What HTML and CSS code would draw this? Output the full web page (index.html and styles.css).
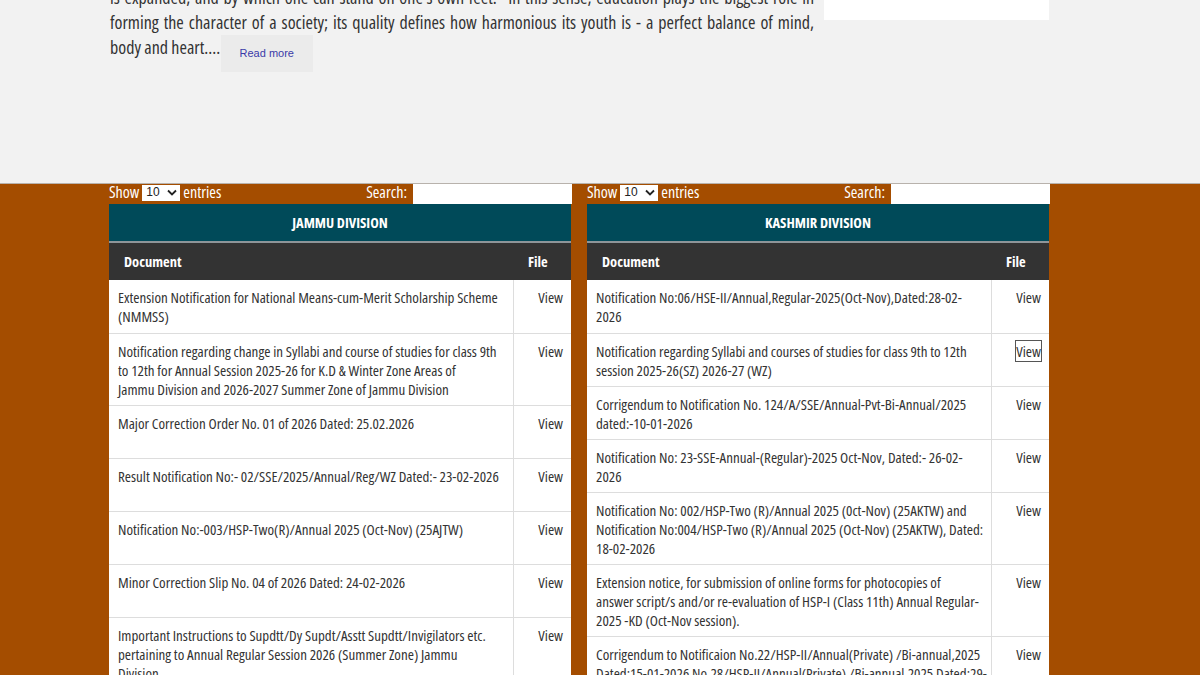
FILE: index.html
```html
<!DOCTYPE html>
<html lang="en">
<head>
<meta charset="utf-8">
<title>Notifications</title>
<link rel="stylesheet" href="styles.css">
</head>
<body>
<section class="intro">
  <div class="intro-inner">
    <div class="intro-text">
      <p>is expanded, and by which one can stand on one's own feet." In this sense, education plays the biggest role in forming the character of a society; its quality defines how harmonious its youth is - a perfect balance of mind, body and heart.... <a class="read-more" href="#">Read more</a></p>
    </div>
    <aside class="intro-side"></aside>
  </div>
</section>

<section class="band">
  <div class="band-inner">
    <div class="division">
      <div class="dt-controls">
        <label class="dt-length">Show <span class="dt-select">10<svg width="10" height="7" viewBox="0 0 10 7"><path d="M1 1.5 L5 5.5 L9 1.5" fill="none" stroke="#222" stroke-width="1.8"/></svg></span> entries</label>
        <label class="dt-search">Search: <span class="dt-input"></span></label>
      </div>
      <table class="docs">
        <colgroup><col class="col-doc"><col class="col-file"></colgroup>
        <thead>
          <tr><th colspan="2" class="div-title">JAMMU DIVISION</th></tr>
          <tr class="col-heads"><th class="c-doc">Document</th><th class="c-file">File</th></tr>
        </thead>
        <tbody>
          <tr><td class="c-doc">Extension Notification for National Means-cum-Merit Scholarship Scheme<br>(NMMSS)</td><td class="c-file"><a href="#">View</a></td></tr>
          <tr><td class="c-doc">Notification regarding change in Syllabi and course of studies for class 9th<br>to 12th for Annual Session 2025-26 for K.D &amp; Winter Zone Areas of<br>Jammu Division and 2026-2027 Summer Zone of Jammu Division</td><td class="c-file"><a href="#">View</a></td></tr>
          <tr><td class="c-doc">Major Correction Order No. 01 of 2026 Dated: 25.02.2026</td><td class="c-file"><a href="#">View</a></td></tr>
          <tr><td class="c-doc">Result Notification No:- 02/SSE/2025/Annual/Reg/WZ Dated:- 23-02-2026</td><td class="c-file"><a href="#">View</a></td></tr>
          <tr><td class="c-doc">Notification No:-003/HSP-Two(R)/Annual 2025 (Oct-Nov) (25AJTW)</td><td class="c-file"><a href="#">View</a></td></tr>
          <tr><td class="c-doc">Minor Correction Slip No. 04 of 2026 Dated: 24-02-2026</td><td class="c-file"><a href="#">View</a></td></tr>
          <tr><td class="c-doc">Important Instructions to Supdtt/Dy Supdt/Asstt Supdtt/Invigilators etc.<br>pertaining to Annual Regular Session 2026 (Summer Zone) Jammu<br>Division</td><td class="c-file"><a href="#">View</a></td></tr>
        </tbody>
      </table>
    </div>

    <div class="division">
      <div class="dt-controls">
        <label class="dt-length">Show <span class="dt-select">10<svg width="10" height="7" viewBox="0 0 10 7"><path d="M1 1.5 L5 5.5 L9 1.5" fill="none" stroke="#222" stroke-width="1.8"/></svg></span> entries</label>
        <label class="dt-search">Search: <span class="dt-input"></span></label>
      </div>
      <table class="docs">
        <colgroup><col class="col-doc"><col class="col-file"></colgroup>
        <thead>
          <tr><th colspan="2" class="div-title">KASHMIR DIVISION</th></tr>
          <tr class="col-heads"><th class="c-doc">Document</th><th class="c-file">File</th></tr>
        </thead>
        <tbody>
          <tr><td class="c-doc">Notification No:06/HSE-II/Annual,Regular-2025(Oct-Nov),Dated:28-02-<br>2026</td><td class="c-file"><a href="#">View</a></td></tr>
          <tr><td class="c-doc">Notification regarding Syllabi and courses of studies for class 9th to 12th<br>session 2025-26(SZ) 2026-27 (WZ)</td><td class="c-file"><a href="#" class="focused">View</a></td></tr>
          <tr><td class="c-doc">Corrigendum to Notification No. 124/A/SSE/Annual-Pvt-Bi-Annual/2025<br>dated:-10-01-2026</td><td class="c-file"><a href="#">View</a></td></tr>
          <tr><td class="c-doc">Notification No: 23-SSE-Annual-(Regular)-2025 Oct-Nov, Dated:- 26-02-<br>2026</td><td class="c-file"><a href="#">View</a></td></tr>
          <tr><td class="c-doc">Notification No: 002/HSP-Two (R)/Annual 2025 (0ct-Nov) (25AKTW) and<br>Notification No:004/HSP-Two (R)/Annual 2025 (Oct-Nov) (25AKTW), Dated:<br>18-02-2026</td><td class="c-file"><a href="#">View</a></td></tr>
          <tr><td class="c-doc">Extension notice, for submission of online forms for photocopies of<br>answer script/s and/or re-evaluation of HSP-I (Class 11th) Annual Regular-<br>2025 -KD (Oct-Nov session).</td><td class="c-file"><a href="#">View</a></td></tr>
          <tr><td class="c-doc">Corrigendum to Notificaion No.22/HSP-II/Annual(Private) /Bi-annual,2025<br>Dated:15-01-2026 No.28/HSP-II/Annual(Private) /Bi-annual,2025 Dated:29-<br>01-2026</td><td class="c-file"><a href="#">View</a></td></tr>
        </tbody>
      </table>
    </div>
  </div>
</section>
</body>
</html>
```

FILE: styles.css
```css
* { box-sizing: border-box; }

html, body {
  margin: 0;
  padding: 0;
}

body {
  background: #f2f2f2;
  font-family: "Open Sans", "Noto Sans", sans-serif;
  font-stretch: 75%;
  color: #333;
  height: 675px;
  overflow: hidden;
}

.intro {
  height: 183px;
}

.intro-inner {
  width: 940px;
  margin-left: 109px;
  display: flex;
  gap: 10px;
  align-items: flex-start;
}

.intro-text {
  width: 705px;
  flex: none;
}

.intro-text p {
  margin: -15px 0 0 1px;
  font-size: 18px;
  line-height: 25px;
  text-align: justify;
  color: #333;
}

.read-more {
  display: inline-block;
  margin-left: -3px;
  padding: 9px 19px 10px;
  background: #ebebeb;
  color: #3a3aa8;
  text-decoration: none;
  font-family: "Liberation Sans", Arial, sans-serif;
  font-stretch: 100%;
  font-size: 11px;
  line-height: 18px;
  vertical-align: -3px;
}

.intro-side {
  width: 225px;
  height: 20px;
  background: #fff;
}

.band {
  background: #a44d00;
  border-top: 1px solid #b8b2ac;
  min-height: 492px;
}

.band-inner {
  width: 940px;
  margin-left: 109px;
  display: grid;
  grid-template-columns: 462px 462px;
  column-gap: 16px;
  align-items: start;
}

.dt-controls {
  display: flex;
  justify-content: space-between;
  align-items: flex-start;
  height: 20px;
  color: #fff;
  font-size: 16px;
  line-height: 17px;
}

.dt-length {
  display: flex;
  align-items: center;
  gap: 3px;
}

.dt-select {
  display: inline-flex;
  align-items: center;
  justify-content: space-between;
  width: 38px;
  height: 16px;
  padding: 0 3px 0 4px;
  background: #fff;
  color: #222;
  font-family: "Liberation Sans", Arial, sans-serif;
  font-stretch: 100%;
  font-size: 12px;
}

.dt-search {
  display: flex;
  align-items: flex-start;
  gap: 6px;
  margin-right: -1px;
}

.dt-input {
  display: block;
  width: 159px;
  height: 20px;
  background: #fff;
}

.docs {
  width: 462px;
  border-collapse: collapse;
  background: #fff;
  font-size: 15px;
  line-height: 19px;
  table-layout: fixed;
}

.col-doc { width: 404px; }
.col-file { width: 58px; }

.docs th {
  color: #fff;
  font-weight: 700;
  font-size: 14.5px;
}

.div-title {
  background: #004a59;
  height: 38px;
  text-align: center;
  border-bottom: 2px solid #8e9599;
  padding: 0;
}

.col-heads th {
  background: #333;
  height: 38px;
  padding: 0 15px;
  text-align: left;
}

.col-heads th.c-file {
  text-align: right;
  padding-right: 24px;
}

.docs td {
  vertical-align: top;
  padding: 8px 2px 6px 9px;
  height: 53px;
  border-bottom: 1px solid #ddd;
  color: #333;
}

.docs td.c-doc {
  white-space: nowrap;
}

.docs td.c-file {
  text-align: right;
  padding-right: 8px;
  border-left: 1px solid #ddd;
}

.docs td a {
  color: #333;
  text-decoration: none;
}

.docs td a.focused {
  outline: 1px solid #555;
  outline-offset: 0;
}
```
